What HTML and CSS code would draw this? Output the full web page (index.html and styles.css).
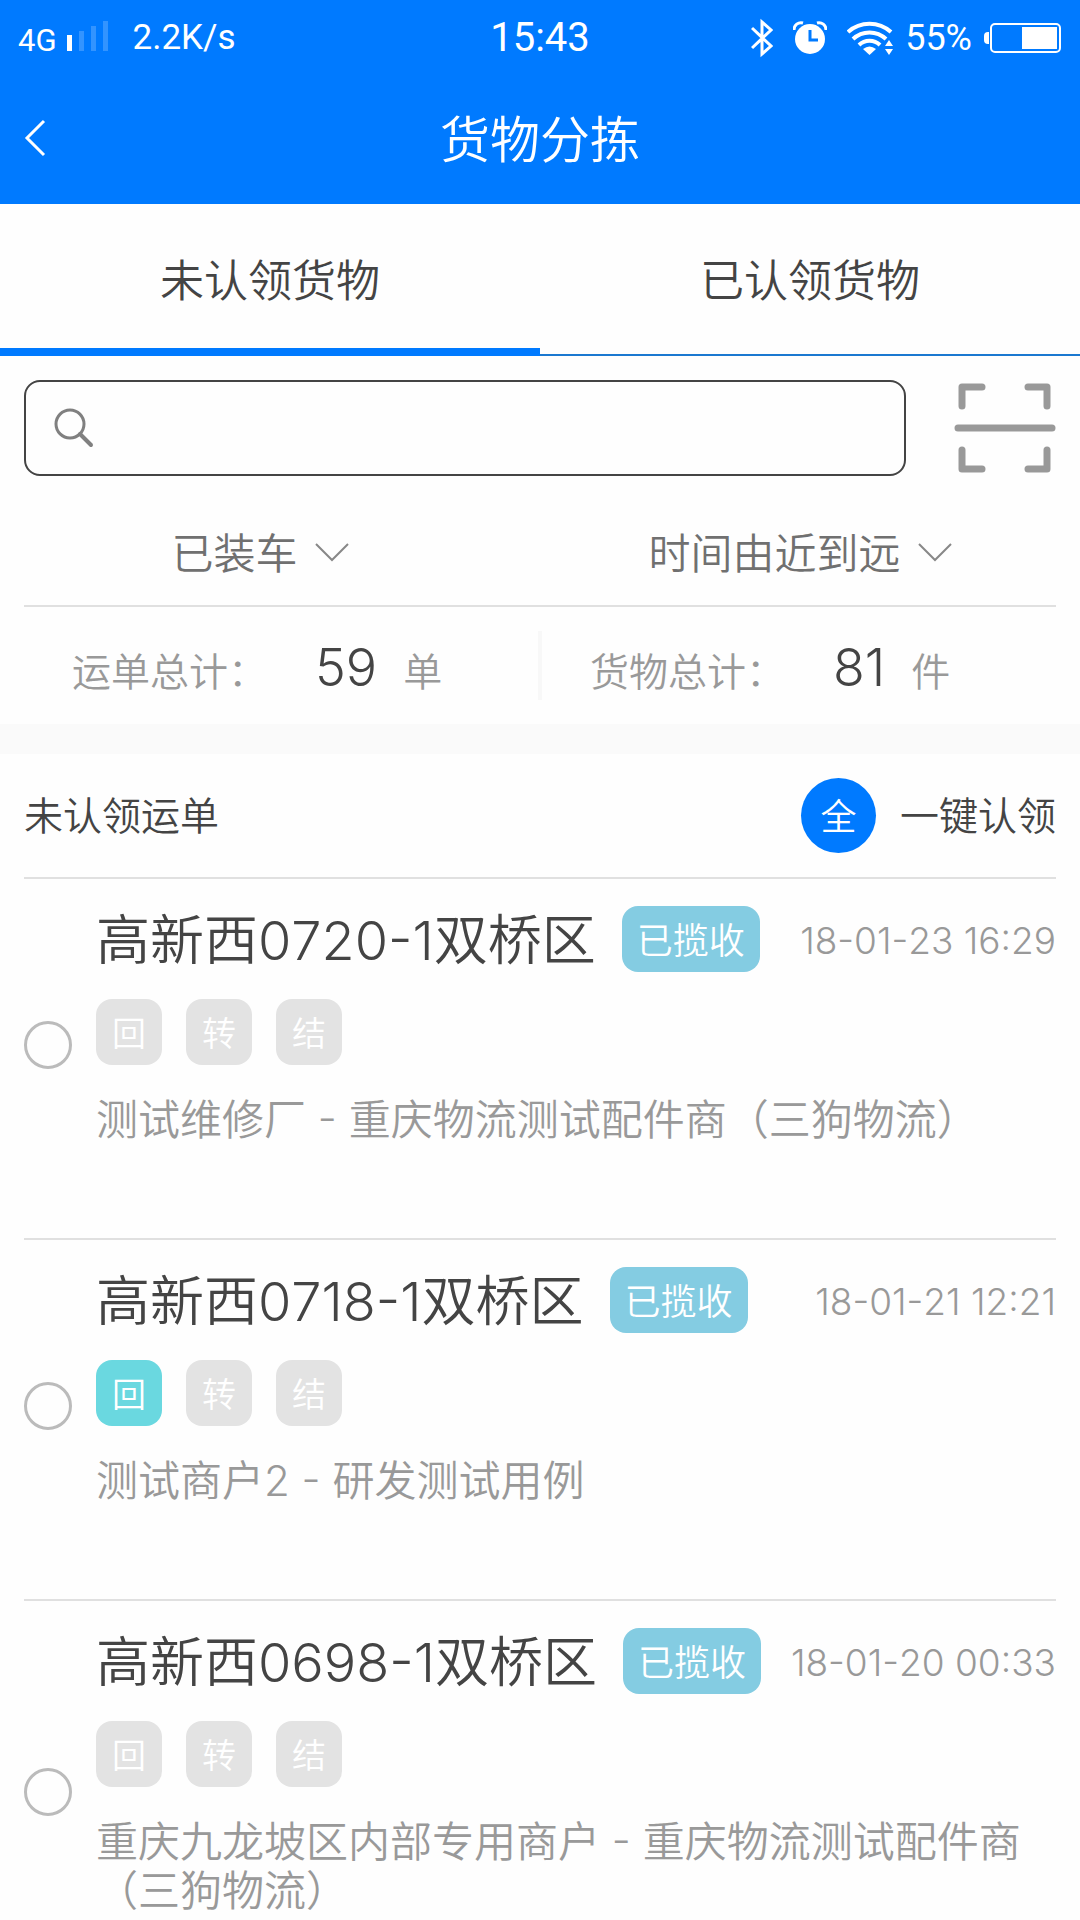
FILE: index.html
```html
<!DOCTYPE html>
<html lang="zh-CN">
<head>
    <meta charset="utf-8">
    <meta name="viewport" content="width=device-width, initial-scale=1">
    <title>货物分拣</title>
    <link rel="stylesheet" href="styles.css">
</head>
<body>
    <header class="header">
        <div class="status-bar">
            <div class="status-left">
                <span class="carrier">
                    4G
                    <svg width="42" height="30" viewBox="0 0 42 30" fill="#fff">
                        <rect x="0" y="14" width="5" height="16"/>
                        <rect x="12" y="10" width="5" height="20" opacity="0.2"/>
                        <rect x="24" y="5" width="5" height="25" opacity="0.2"/>
                        <rect x="36" y="0" width="5" height="30" opacity="0.2"/>
                    </svg>
                </span>
                <span class="speed">2.2K/s</span>
            </div>
            <span class="clock">15:43</span>
            <div class="status-right">
                <svg width="22" height="40" viewBox="0 0 22 40" fill="none" stroke="#fff" stroke-width="3">
                    <path d="M1 10l19 18-9 8V4l9 8L1 30"/>
                </svg>
                <svg width="34" height="34" viewBox="0 0 34 34">
                    <circle cx="17" cy="18" r="15" fill="#fff"/>
                    <path d="M1 9a7 7 0 0 1 9-7M24 2a7 7 0 0 1 9 7" fill="none" stroke="#fff" stroke-width="3"/>
                    <path d="M17 9v10h8" fill="none" stroke="#007aff" stroke-width="3"/>
                </svg>
                <svg width="46" height="34" viewBox="0 0 46 34">
                    <g fill="none" stroke="#fff" stroke-width="4">
                        <path d="M1 11a32 32 0 0 1 43 0"/>
                        <path d="M6 18a24 24 0 0 1 33 0"/>
                        <path d="M12 24a15 15 0 0 1 21 0"/>
                    </g>
                    <path d="M16 28q6.500-5 13 0l-6.500 6z" fill="#fff"/>
                    <path d="M38 25l4-6 4 6zM38 28h8l-4 6z" fill="#fff"/>
                </svg>
                <span class="percent">55%</span>
                <svg width="78" height="32" viewBox="0 0 78 32">
                    <path d="M5 10H4a4 4 0 0 0-4 4v4a4 4 0 0 0 4 4h1z" fill="#fff"/>
                    <rect x="7" y="2" width="69" height="28" rx="4" fill="none" stroke="#fff" stroke-width="2"/>
                    <rect x="38" y="5" width="35" height="22" fill="#fff"/>
                </svg>
            </div>
        </div>
        <div class="nav-bar">
            <button class="back" type="button" aria-label="返回">
                <svg width="22" height="38" viewBox="0 0 22 38" fill="none" stroke="#fff" stroke-width="3">
                    <path d="M20 2L3 19l17 17"/>
                </svg>
            </button>
            <h1>货物分拣</h1>
        </div>
    </header>

    <nav class="tabs">
        <a class="tab active" href="#unclaimed">未认领货物</a>
        <a class="tab" href="#claimed">已认领货物</a>
    </nav>

    <div class="search-row">
        <label class="search-box">
            <svg width="40" height="40" viewBox="0 0 40 40" fill="none" stroke="#808080">
                <circle cx="16" cy="16" r="14" stroke-width="3"/>
                <path d="M26 26l11 11" stroke-width="4" stroke-linecap="round"/>
            </svg>
            <input type="search" aria-label="搜索">
        </label>
        <button class="scan" type="button" aria-label="扫码">
            <svg width="102" height="90" viewBox="0 0 102 90" fill="none" stroke="#999" stroke-width="7" stroke-linecap="round" stroke-linejoin="round">
                <path d="M28 4H8v19M74 4h19v19M8 67v19h20M93 67v19H74M4 45h94"/>
            </svg>
        </button>
    </div>

    <div class="filters">
        <div class="filter">
            <select aria-label="状态">
                <option>已装车</option>
            </select>
            <svg width="34" height="20" viewBox="0 0 34 20" fill="none" stroke="#888" stroke-width="2">
                <path d="M1 2l16 16L33 2"/>
            </svg>
        </div>
        <div class="filter">
            <select aria-label="排序">
                <option>时间由近到远</option>
            </select>
            <svg width="34" height="20" viewBox="0 0 34 20" fill="none" stroke="#888" stroke-width="2">
                <path d="M1 2l16 16L33 2"/>
            </svg>
        </div>
    </div>

    <div class="totals">
        <div class="total">
            <span>运单总计：</span>
            <strong>59</strong>
            <span>单</span>
        </div>
        <div class="total">
            <span>货物总计：</span>
            <strong>81</strong>
            <span>件</span>
        </div>
    </div>

    <main class="orders" id="unclaimed">
        <div class="orders-header">
            <h2>未认领运单</h2>
            <button class="claim-all" type="button"><span class="circle">全</span>一键认领</button>
        </div>

        <ul class="order-list">
            <li class="order">
                <input type="radio" name="order" id="order-0720">
                <div class="order-body">
                    <div class="order-title">
                        <label for="order-0720">高新西0720-1双桥区</label>
                        <span class="status">已揽收</span>
                        <time>18-01-23 16:29</time>
                    </div>
                    <div class="tags">
                        <span class="tag">回</span>
                        <span class="tag">转</span>
                        <span class="tag">结</span>
                    </div>
                    <p class="route">测试维修厂 - 重庆物流测试配件商（三狗物流）</p>
                </div>
            </li>
            <li class="order">
                <input type="radio" name="order" id="order-0718">
                <div class="order-body">
                    <div class="order-title">
                        <label for="order-0718">高新西0718-1双桥区</label>
                        <span class="status">已揽收</span>
                        <time>18-01-21 12:21</time>
                    </div>
                    <div class="tags">
                        <span class="tag on">回</span>
                        <span class="tag">转</span>
                        <span class="tag">结</span>
                    </div>
                    <p class="route">测试商户2 - 研发测试用例</p>
                </div>
            </li>
            <li class="order">
                <input type="radio" name="order" id="order-0698">
                <div class="order-body">
                    <div class="order-title">
                        <label for="order-0698">高新西0698-1双桥区</label>
                        <span class="status">已揽收</span>
                        <time>18-01-20 00:33</time>
                    </div>
                    <div class="tags">
                        <span class="tag">回</span>
                        <span class="tag">转</span>
                        <span class="tag">结</span>
                    </div>
                    <p class="route">重庆九龙坡区内部专用商户 - 重庆物流测试配件商（三狗物流）</p>
                </div>
            </li>
        </ul>
    </main>
</body>
</html>
```

FILE: styles.css
```css
* {
    box-sizing: border-box;
}

html,
body {
    height: 100%;
}

body {
    margin: 0;
    display: flex;
    flex-direction: column;
    overflow: hidden;
    background: #fefefe;
    color: #444;
    font-family: Inter, "Noto Sans CJK SC", sans-serif;
    font-weight: 350;
    font-kerning: none;
    font-feature-settings: "case";
}

body > * {
    flex-shrink: 0;
}

button,
input,
select {
    font: inherit;
    color: inherit;
    border: 0;
    padding: 0;
    margin: 0;
    background: none;
}

svg {
    display: block;
    flex-shrink: 0;
}

h1,
h2,
p,
ul {
    margin: 0;
    padding: 0;
    font-weight: inherit;
}

/* Header */
.header {
    background: #007aff;
    color: #fff;
}

.status-bar {
    display: grid;
    grid-template-columns: 1fr auto 1fr;
    align-items: center;
    height: 72px;
    padding: 4px 18px 0;
    font-family: Roboto, sans-serif;
    font-size: 35px;
    font-weight: 400;
    line-height: 40px;
}

.status-left {
    display: flex;
    align-items: center;
    gap: 24px;
}

.carrier {
    display: flex;
    align-items: baseline;
    gap: 10px;
    padding-top: 6px;
    font-size: 31px;
}

.clock {
    font-size: 40px;
}

.status-right {
    display: flex;
    align-items: center;
    justify-content: flex-end;
}

.status-right svg + svg {
    margin-left: 20px;
}

.percent {
    margin: 0 12px;
    font-size: 36px;
}

.nav-bar {
    display: grid;
    grid-template-columns: 1fr auto 1fr;
    align-items: center;
    height: 132px;
    padding: 0 24px;
}

.back {
    justify-self: start;
    cursor: pointer;
}

.nav-bar h1 {
    padding-top: 4px;
    font-size: 50px;
    line-height: 60px;
}

/* Tabs */
.tabs {
    display: flex;
}

.tab {
    flex: 1;
    height: 152px;
    border-bottom: 2px solid #1a78d0;
    color: #444;
    font-size: 44px;
    line-height: 154px;
    text-align: center;
    text-decoration: none;
}

.tab.active {
    border-bottom: 8px solid #007aff;
}

/* Search */
.search-row {
    display: flex;
    align-items: center;
    gap: 48px;
    padding: 24px 24px 0;
}

.search-box {
    flex: 1;
    display: flex;
    align-items: center;
    gap: 20px;
    height: 96px;
    padding: 0 28px;
    border: 2px solid #444;
    border-radius: 16px;
}

.search-box input {
    flex: 1;
    min-width: 0;
    font-size: 42px;
    outline: none;
}

.scan {
    cursor: pointer;
}

/* Filters */
.filters {
    display: flex;
    height: 131px;
    position: relative;
}

.filters::after {
    content: '';
    position: absolute;
    left: 24px;
    right: 24px;
    bottom: 0;
    height: 2px;
    background: #e0e0e0;
}

.filter {
    flex: 1;
    display: flex;
    align-items: center;
    justify-content: center;
    gap: 16px;
    padding: 20px 20px 0 0;
    color: #707070;
}

.filter select {
    appearance: none;
    padding-top: 4px;
    font-size: 42px;
    line-height: 60px;
}

/* Totals */
.totals {
    display: flex;
    padding: 24px 24px;
    border-bottom: 30px solid #fafafa;
}

.total {
    flex: 1;
    display: flex;
    align-items: baseline;
    height: 69px;
    padding-left: 48px;
    color: #999;
    font-size: 39px;
    line-height: 74px;
}

.total + .total {
    border-left: 4px solid #f8f8f8;
}

.total strong {
    margin: 0 26px 0 48px;
    color: #444;
    font-size: 52px;
    font-weight: 350;
}

/* Orders */
body > .orders {
    flex: 1;
    min-height: 0;
    overflow: auto;
    scrollbar-width: none;
    padding: 0 24px;
}

.orders-header {
    display: flex;
    align-items: center;
    justify-content: space-between;
    height: 125px;
    border-bottom: 2px solid #e0e0e0;
}

.orders-header h2,
.claim-all {
    font-size: 39px;
    line-height: 48px;
}

.claim-all {
    display: flex;
    align-items: center;
    gap: 24px;
    cursor: pointer;
}

.circle {
    width: 75px;
    height: 75px;
    border-radius: 50%;
    background: #007aff;
    color: #fff;
    font-size: 36px;
    line-height: 78px;
    text-align: center;
}

.order-list {
    list-style: none;
}

.order {
    display: flex;
    align-items: center;
    gap: 24px;
    padding-bottom: 27px;
    border-bottom: 2px solid #e0e0e0;
}

.order input {
    appearance: none;
    flex-shrink: 0;
    width: 48px;
    height: 48px;
    border: 3px solid #bbb;
    border-radius: 50%;
}

.order input:checked {
    background: #007aff;
}

.order-body {
    flex: 1;
    min-width: 0;
    padding: 27px 0 67px;
}

.order-title {
    display: flex;
    align-items: center;
    height: 66px;
    line-height: 70px;
}

.order-title label {
    padding-top: 4px;
    font-size: 54px;
}

.order-title time {
    margin-left: auto;
    padding-top: 4px;
    color: #999;
    font-size: 37px;
}

.status {
    height: 66px;
    margin-left: 26px;
    padding: 0 15px;
    border-radius: 16px;
    background: #84cce2;
    color: #fff;
    font-size: 36px;
}

.tags {
    display: flex;
    gap: 24px;
    margin: 27px 0 30px;
}

.tag {
    width: 66px;
    height: 66px;
    border-radius: 16px;
    background: #e3e3e3;
    color: #fff;
    font-size: 34px;
    line-height: 70px;
    text-align: center;
}

.tag.on {
    background: #6ad8e0;
}

.route {
    color: #999;
    font-size: 42px;
    line-height: 49px;
}
```
